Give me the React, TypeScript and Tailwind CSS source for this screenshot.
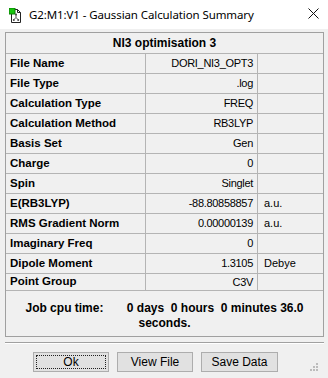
import React from "react";

// ── Data ──────────────────────────────────────────────────────────────────
type Row = { label: string; value: string; unit?: string };

const ROWS: Row[] = [
  { label: "File Name", value: "DORI_NI3_OPT3" },
  { label: "File Type", value: ".log" },
  { label: "Calculation Type", value: "FREQ" },
  { label: "Calculation Method", value: "RB3LYP" },
  { label: "Basis Set", value: "Gen" },
  { label: "Charge", value: "0" },
  { label: "Spin", value: "Singlet" },
  { label: "E(RB3LYP)", value: "-88.80858857", unit: "a.u." },
  { label: "RMS Gradient Norm", value: "0.00000139", unit: "a.u." },
  { label: "Imaginary Freq", value: "0" },
  { label: "Dipole Moment", value: "1.3105", unit: "Debye" },
  { label: "Point Group", value: "C3V" },
];

function AppIcon() {
  return (
    <svg width="14" height="15" viewBox="0 0 14 15" className="shrink-0">
      <path d="M2.5 1.5h6l3 3v10h-9z" fill="#fff" stroke="#222" />
      <path d="M8.5 1.5v3h3" fill="none" stroke="#222" />
      <rect x="0" y="0" width="6" height="6" fill="#16c60c" stroke="#0a7d05" />
      <circle cx="7" cy="6.5" r="1" fill="#444" />
      <circle cx="4.8" cy="12" r="1" fill="#444" />
      <circle cx="9.2" cy="12" r="1" fill="#444" />
      <path d="M7 7v2.5M7 9.5l-2 2M7 9.5l2 2" stroke="#444" strokeWidth="0.9" />
    </svg>
  );
}

function TitleBar() {
  return (
    <div className="h-[29px] bg-white flex items-center shrink-0">
      <div className="pl-[9px] pr-[6px] pt-[1px]">
        <AppIcon />
      </div>
      <span className="font-['Noto_Sans',sans-serif] text-[11.5px] text-[#000] tracking-[-0.1px]">
        G2:M1:V1 - Gaussian Calculation Summary
      </span>
      <div className="flex-1" />
      <svg width="11" height="11" viewBox="0 0 11 11" className="mr-[9px] mt-[-2px]">
        <path d="M0.5 0.5l10 10M10.5 0.5l-10 10" stroke="#111" strokeWidth="1" />
      </svg>
    </div>
  );
}

function SummaryTable() {
  return (
    <div className="ml-[5px] mt-[3px] w-[319px] h-[305px] border border-[#a0a0a0] flex flex-col font-['Liberation_Sans',Arial,sans-serif] text-black">
      {/* Header */}
      <div className="h-[21px] border-b border-[#b4b4b4] flex items-center justify-center text-[12px] font-bold">
        NI3 optimisation 3
      </div>

      {/* Rows */}
      <div className="grid grid-cols-[140px_112px_1fr]">
        {ROWS.map((r, i) => {
          const last = i === ROWS.length - 1;
          const h = last ? "h-[17px]" : "h-[20px]";
          return (
            <React.Fragment key={r.label}>
              <div className={`${h} border-b border-r border-[#b4b4b4] flex items-center pl-[4px] text-[11.5px] font-bold`}>
                {r.label}
              </div>
              <div className={`${h} border-b border-r border-[#b4b4b4] flex items-center justify-end pr-[4px] text-[11px] tracking-[-0.3px]`}>
                {r.value}
              </div>
              <div className={`${h} border-b border-[#b4b4b4] flex items-center pl-[6px] text-[11px]`}>
                {r.unit ?? ""}
              </div>
            </React.Fragment>
          );
        })}
      </div>

      {/* Job cpu time */}
      <div className="pt-[10px] text-center text-[12px] font-bold leading-[15px] whitespace-pre">
        {"Job cpu time:       0 days  0 hours  0 minutes 36.0\nseconds."}
      </div>
    </div>
  );
}

function Buttons() {
  const base =
    "w-[76px] h-[20px] bg-[#e1e1e1] border border-[#adadad] flex items-center justify-center text-[12px] font-['Liberation_Sans',Arial,sans-serif] text-black";
  return (
    <div className="flex pl-[33px] gap-[8px] mt-[8px]">
      <button className={`${base} border-[#6f6f6f] p-[2px]`}>
        <span className="w-full h-full border border-dotted border-[#222] flex items-center justify-center">
          Ok
        </span>
      </button>
      <button className={base}>View File</button>
      <button className={`${base} w-[77px]`}>Save Data</button>
    </div>
  );
}

function Grip() {
  const dots = [
    [6, 0],
    [3, 3],
    [6, 3],
    [0, 6],
    [3, 6],
    [6, 6],
  ];
  return (
    <svg width="8" height="8" viewBox="0 0 8 8" className="absolute right-[10px] bottom-[7px]">
      {dots.map(([x, y]) => (
        <rect key={`${x}-${y}`} x={x} y={y} width="2" height="2" fill="#bcbcbc" />
      ))}
    </svg>
  );
}

export default function App() {
  return (
    <div className="relative w-[328px] h-[378px] bg-[#f0f0f0] flex flex-col overflow-hidden">
      <TitleBar />
      <SummaryTable />

      {/* Etched separator */}
      <div className="ml-[5px] mt-[5px] w-[319px] h-[2px] border-t border-[#a0a0a0] border-b border-b-white" />

      <Buttons />
      <Grip />
    </div>
  );
}
